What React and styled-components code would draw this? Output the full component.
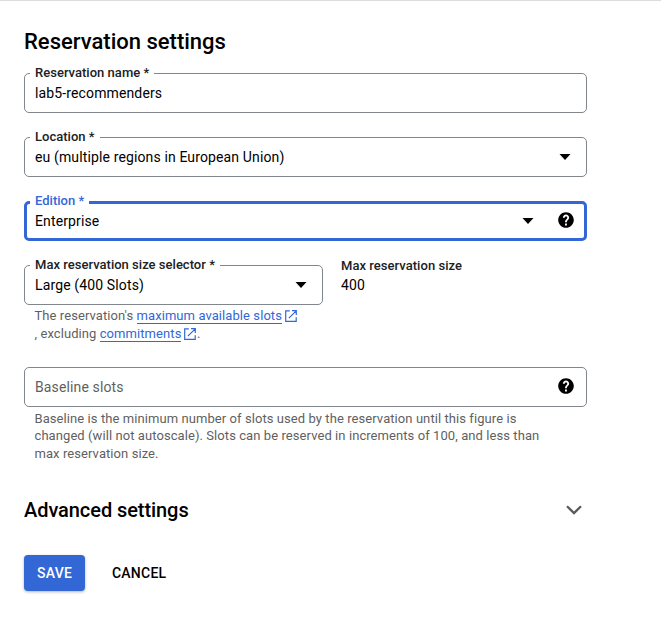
import React from "react";
import styled, { createGlobalStyle } from "styled-components";

const GlobalStyle = createGlobalStyle`
  *, *::before, *::after { box-sizing: border-box; }
  body {
    margin: 0;
    background: #fff;
    color: #000;
    font-family: Roboto, "Liberation Sans", sans-serif;
    -webkit-font-smoothing: antialiased;
  }
`;

const Page = styled.main`
  min-height: 631px;
  border-top: 1px solid #dadce0;
  padding: 27px 74px 0 24px;
`;

const Form = styled.form`
  display: flex;
  flex-direction: column;
  width: 563px;
`;

const Title = styled.h2`
  margin: 0 0 17px;
  height: 28px;
  font-size: 22px;
  line-height: 28px;
  font-weight: 500;
`;

const FieldStack = styled.div`
  display: flex;
  flex-direction: column;
  gap: 24px;
`;

const Field = styled.div`
  position: relative;
  display: flex;
  align-items: center;
  height: 40px;
  padding: 0 ${(p) => (p.$focused ? 9 : 11)}px 0 ${(p) => (p.$focused ? 8 : 10)}px;
  border: ${(p) => (p.$focused ? "3px solid #3367d6" : "1px solid #80868b")};
  border-radius: 5px;
`;

const Label = styled.label`
  position: absolute;
  top: ${(p) => (p.$focused ? -11 : -9)}px;
  left: ${(p) => (p.$focused ? 3 : 5)}px;
  padding: 0 5px;
  background: #fff;
  font-size: 13px;
  line-height: 16px;
  font-weight: 500;
  letter-spacing: 0.02px;
  white-space: nowrap;
  color: ${(p) => (p.$focused ? "#3367d6" : "#202124")};
`;

const Value = styled.span`
  flex: 1;
  font-size: 14px;
  line-height: 20px;
  letter-spacing: 0.13px;
  white-space: nowrap;
  color: ${(p) => (p.$placeholder ? "#5f5f5f" : "#000")};
`;

const Icon = styled.svg`
  display: block;
  flex: none;
  margin-right: ${(p) => p.$gap || 0}px;
  margin-bottom: ${(p) => p.$lift || 0}px;
`;

const SizeRow = styled.div`
  display: grid;
  grid-template-columns: 299px 1fr;
  column-gap: 18px;
`;

const Readout = styled.div`
  display: flex;
  flex-direction: column;
`;

const ReadoutLabel = styled.span`
  height: 10px;
  font-size: 13px;
  line-height: 2px;
  font-weight: 500;
  letter-spacing: 0.04px;
  color: #202124;
`;

const Hint = styled.p`
  margin: ${(p) => p.$top || 2}px 0 0 10.5px;
  font-size: 13px;
  line-height: ${(p) => p.$leading || 18}px;
  letter-spacing: 0.075px;
  white-space: nowrap;
  color: #5f5f5f;
`;

const Link = styled.a`
  color: #3367d6;
  border-bottom: 1px solid #3367d6;
  text-decoration: none;
`;

const InlineIcon = styled.svg`
  display: inline-block;
  vertical-align: -1.5px;
  margin: 0 0.5px 0 3px;
`;

const BaselineBlock = styled.section`
  margin-top: 24px;
`;

const Expander = styled.div`
  display: flex;
  align-items: center;
  justify-content: space-between;
  height: 28px;
  margin-top: 34px;
  padding-right: 5px;
`;

const Subtitle = styled.h3`
  margin: 0;
  font-size: 20px;
  line-height: 28px;
  font-weight: 500;
  letter-spacing: -0.07px;
`;

const Actions = styled.div`
  display: flex;
  gap: 14px;
  margin-top: 31px;
`;

const Button = styled.button`
  height: 36px;
  padding: 0 12.8px 0 13px;
  border: 0;
  border-radius: 4px;
  font: 500 14px/36px Roboto, "Liberation Sans", sans-serif;
  letter-spacing: 0.25px;
  color: ${(p) => (p.$primary ? "#fff" : "#000")};
  background: ${(p) => (p.$primary ? "#3367d6" : "transparent")};
  box-shadow: ${(p) => (p.$primary ? "0 1px 3px rgba(0,0,0,.3)" : "none")};
`;

const DropArrow = ({ gap }) => (
  <Icon $gap={gap} width="12" height="6" viewBox="0 0 12 6" aria-hidden="true">
    <path d="M0.5 0h11L6 6z" fill="#000" />
  </Icon>
);

const Help = () => (
  <Icon $lift={2} width="18" height="18" viewBox="0 0 24 24" aria-hidden="true">
    <path
      fill="#000"
      d="M12 1.6C6.26 1.6 1.6 6.26 1.6 12S6.26 22.4 12 22.4 22.4 17.74 22.4 12 17.74 1.6 12 1.6zm1.2 17.6h-2.5v-2.5h2.5v2.5zm1.87-7.95l-.9.92C13.45 12.9 13.2 13.5 13.2 15h-2.5v-.5c0-1.1.45-2.1 1.17-2.83l1.24-1.26c.37-.36.59-.86.59-1.41 0-1.1-.7-1.7-1.7-1.7S10.300 8 10.300 9H7.800c0-2.21 1.99-4.200 4.200-4.200s4.200 1.99 4.200 4.200c0 .88-.56 1.68-1.13 2.25z"
    />
  </Icon>
);

const External = () => (
  <InlineIcon width="12" height="12" viewBox="0 0 12 12" fill="none" stroke="#3367d6" strokeWidth="1.2" aria-hidden="true">
    <path d="M4.800.8H.7v10.500h10.500V7.200M7 .7h4.300V5M11.200.8 3.900 8.100" />
  </InlineIcon>
);

export default function App() {
  return (
    <Page>
      <GlobalStyle />
      <Form>
        <Title>Reservation settings</Title>
        <FieldStack>
          <Field>
            <Label>Reservation name *</Label>
            <Value>lab5-recommenders</Value>
          </Field>
          <Field>
            <Label>Location *</Label>
            <Value>eu (multiple regions in European Union)</Value>
            <DropArrow gap={4} />
          </Field>
          <Field $focused>
            <Label $focused>Edition *</Label>
            <Value>Enterprise</Value>
            <DropArrow gap={23} />
            <Help />
          </Field>
          <SizeRow>
            <Field>
              <Label>Max reservation size selector *</Label>
              <Value>Large (400 Slots)</Value>
              <DropArrow gap={4} />
            </Field>
            <Readout>
              <ReadoutLabel>Max reservation size</ReadoutLabel>
              <Value>400</Value>
            </Readout>
          </SizeRow>
        </FieldStack>
        <Hint>
          The reservation's <Link>maximum available slots</Link>
          <External />
          <br />, excluding <Link>commitments</Link>
          <External />.
        </Hint>
        <BaselineBlock>
          <Field>
            <Value $placeholder>Baseline slots</Value>
            <Help />
          </Field>
          <Hint $top={2.9} $leading={17.4}>
            Baseline is the minimum number of slots used by the reservation until this figure is
            <br />
            changed (will not autoscale). Slots can be reserved in increments of 100, and less than
            <br />
            max reservation size.
          </Hint>
        </BaselineBlock>
        <Expander>
          <Subtitle>Advanced settings</Subtitle>
          <Icon width="16" height="10" viewBox="0 0 16 10" fill="none" stroke="#5a5a5a" strokeWidth="2.3" aria-hidden="true">
            <path d="M1 1.200 8 8.100l7-6.900" />
          </Icon>
        </Expander>
        <Actions>
          <Button type="button" $primary>SAVE</Button>
          <Button type="button">CANCEL</Button>
        </Actions>
      </Form>
    </Page>
  );
}
